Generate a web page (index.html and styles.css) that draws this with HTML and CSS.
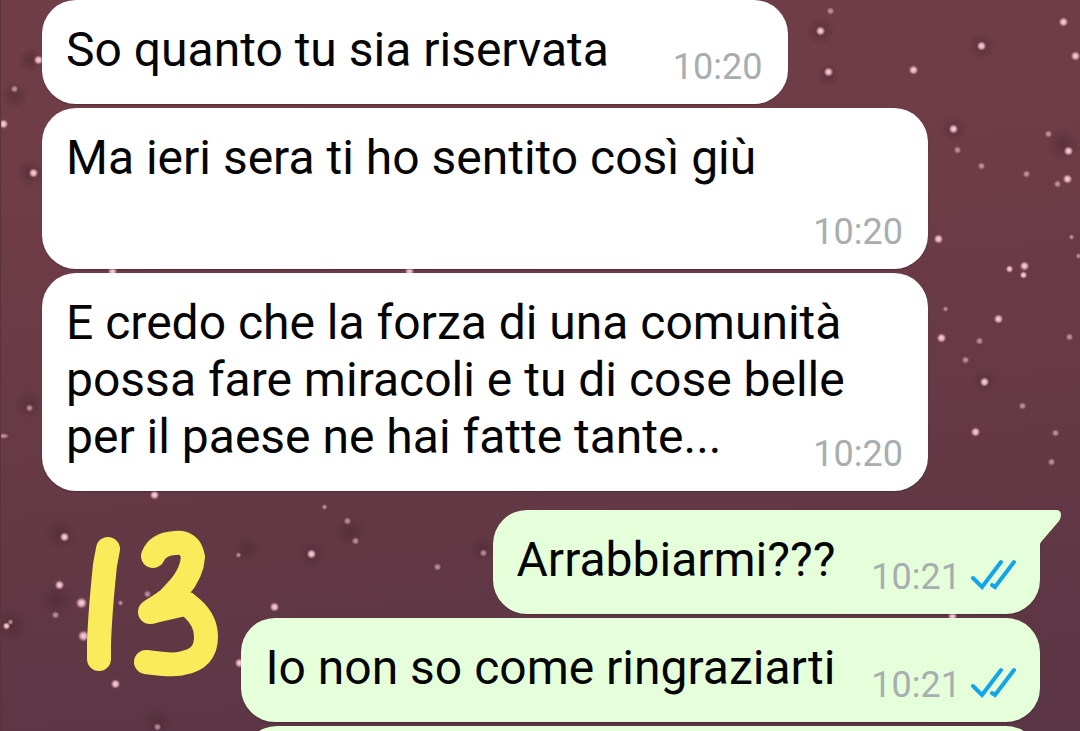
FILE: index.html
```html
<!DOCTYPE html>
<html lang="it">
<head>
<meta charset="utf-8">
<meta name="viewport" content="width=device-width, initial-scale=1">
<title>Chat</title>
<link rel="stylesheet" href="styles.css">
</head>
<body>
<svg class="sky" viewBox="0 0 1080 731" preserveAspectRatio="xMidYMid slice" aria-hidden="true">
  <defs>
    <radialGradient id="glow">
      <stop offset="0" stop-color="#ffdce4"/>
      <stop offset="0.5" stop-color="#eeb7c4" stop-opacity="0.85"/>
      <stop offset="1" stop-color="#b77c8b" stop-opacity="0"/>
    </radialGradient>
    <radialGradient id="haze">
      <stop offset="0" stop-color="#47262f" stop-opacity="0.5"/>
      <stop offset="1" stop-color="#47262f" stop-opacity="0"/>
    </radialGradient>
  </defs>
  <g fill="url(#haze)">
    <circle cx="820" cy="31" r="15"/><circle cx="828" cy="75" r="12"/><circle cx="981" cy="46" r="14"/>
    <circle cx="953" cy="129" r="13"/><circle cx="1063" cy="145" r="17"/><circle cx="984" cy="382" r="12"/>
    <circle cx="30" cy="60" r="13"/><circle cx="14" cy="95" r="14"/><circle cx="30" cy="173" r="14"/>
    <circle cx="60" cy="534" r="17"/><circle cx="56" cy="600" r="17"/><circle cx="10" cy="625" r="17"/>
    <circle cx="246" cy="549" r="14"/><circle cx="311" cy="554" r="14"/><circle cx="350" cy="532" r="16"/>
    <circle cx="157" cy="722" r="15"/><circle cx="28" cy="404" r="14"/><circle cx="482" cy="548" r="13"/>
  </g>
  <g fill="url(#glow)">
    <circle cx="820" cy="31" r="5"/><circle cx="828" cy="72" r="5"/><circle cx="913" cy="70" r="5"/>
    <circle cx="981" cy="46" r="5"/><circle cx="1063" cy="22" r="5"/><circle cx="1075" cy="56" r="5"/>
    <circle cx="953" cy="129" r="5"/><circle cx="1068" cy="151" r="5"/><circle cx="1067" cy="179" r="5"/>
    <circle cx="938" cy="239" r="5"/><circle cx="1009" cy="269" r="4"/><circle cx="1024" cy="266" r="5"/>
    <circle cx="1023" cy="275" r="4"/><circle cx="998" cy="319" r="5"/><circle cx="941" cy="338" r="5"/>
    <circle cx="984" cy="382" r="5"/><circle cx="975" cy="432" r="5"/><circle cx="38" cy="60" r="5"/>
    <circle cx="3" cy="124" r="5"/><circle cx="33" cy="173" r="5"/><circle cx="112" cy="271" r="5"/>
    <circle cx="409" cy="271" r="5"/>
    <circle cx="64" cy="537" r="5"/><circle cx="59" cy="585" r="5"/><circle cx="81" cy="603" r="6"/>
    <circle cx="83" cy="636" r="6"/><circle cx="115" cy="684" r="5"/><circle cx="6" cy="626" r="4"/>
    <circle cx="154" cy="495" r="5"/><circle cx="311" cy="554" r="5"/><circle cx="274" cy="607" r="5"/>
    <circle cx="239" cy="663" r="5"/><circle cx="952" cy="616" r="5"/>
  </g>
  <g fill="url(#glow)" opacity="0.6">
    <circle cx="830" cy="11" r="4"/><circle cx="957" cy="150" r="4"/><circle cx="981" cy="166" r="4"/>
    <circle cx="1026" cy="174" r="4"/><circle cx="1048" cy="134" r="4"/><circle cx="1057" cy="184" r="4"/>
    <circle cx="1071" cy="237" r="3"/><circle cx="1078" cy="256" r="3"/><circle cx="945" cy="309" r="3"/>
    <circle cx="979" cy="341" r="4"/><circle cx="965" cy="360" r="4"/><circle cx="1069" cy="337" r="4"/>
    <circle cx="1022" cy="406" r="4"/><circle cx="1055" cy="433" r="4"/><circle cx="1051" cy="462" r="4"/>
    <circle cx="14" cy="89" r="4"/><circle cx="29" cy="408" r="4"/><ellipse cx="3" cy="436" rx="6" ry="3"/>
    <circle cx="55" cy="615" r="4"/><circle cx="10" cy="622" r="3"/><circle cx="120" cy="603" r="3"/>
    <circle cx="147" cy="594" r="4"/><circle cx="157" cy="727" r="4"/><circle cx="238" cy="555" r="3"/>
    <circle cx="324" cy="507" r="3"/><circle cx="347" cy="521" r="4"/><circle cx="355" cy="541" r="4"/>
    <circle cx="437" cy="567" r="4"/><circle cx="483" cy="553" r="4"/>
  </g>
</svg>

<svg class="doodle" viewBox="0 0 140 150" role="img" aria-label="13">
  <path d="M28 24 L25 40 Q20 88 19 119 V134"/>
  <path d="M73 31 Q78 19 95 18 Q110 16 113 32 Q112 48 99 63 L87 76 L71 86 Q68 88 74 86 L100 80 Q107 78 113 84 Q126 96 126 112 Q126 134 103 138 Q95 141 66 137"/>
  <path d="M73 86 L86 76 L107 79"/>
</svg>

<main class="chat">
  <p class="bubble received">So quanto tu sia riservata <span class="meta"><time>10:20</time></span></p>
  <p class="bubble received">Ma ieri sera ti ho sentito così giù <span class="meta"><time>10:20</time></span></p>
  <p class="bubble received">E credo che la forza di una comunità possa fare miracoli e tu di cose belle per il paese ne hai fatte tante... <span class="meta"><time>10:20</time></span></p>
  <p class="bubble sent first">Arrabbiarmi??? <span class="meta"><time>10:21</time><svg class="ticks" viewBox="0 0 46 32" role="img" aria-label="Letto"><path d="M3 20 L12 29 L31 4"/><path d="M22 27 L25 29 L44 4"/></svg></span>
    <svg class="tail" viewBox="0 0 22 34" aria-hidden="true"><path d="M0 0 H16 Q21 0 21 5 Q21 8 19 11 L1 32 L0 34 Z"/></svg></p>
  <p class="bubble sent">Io non so come ringraziarti <span class="meta"><time>10:21</time><svg class="ticks" viewBox="0 0 46 32" role="img" aria-label="Letto"><path d="M3 20 L12 29 L31 4"/><path d="M22 27 L25 29 L44 4"/></svg></span></p>
  <div class="bubble sent next"></div>
</main>
</body>
</html>
```
FILE: styles.css
```css
* { box-sizing: border-box; }

body {
  position: relative;
  height: 100vh;
  margin: 0;
  overflow: hidden;
  background: linear-gradient(175deg, #703e47 0%, #6d3c47 30%, #653945 60%, #5a3545 100%);
  border-left: 1px solid #5b333b;
  font-family: Roboto, "Liberation Sans", sans-serif;
  color: #050505;
}

.sky {
  position: absolute;
  inset: 0;
  width: 100%;
  height: 100%;
}

.doodle {
  position: absolute;
  left: 79px;
  top: 525px;
  width: 140px;
  height: 150px;
  overflow: visible;
  fill: none;
  stroke: #faeb5a;
  stroke-width: 24px;
  stroke-linecap: round;
  stroke-linejoin: round;
}

.chat {
  position: relative;
  display: flex;
  flex-direction: column;
  gap: 4px;
  height: 100%;
  overflow: hidden;
  padding: 0 40px 0 41px;
}

.bubble {
  display: flow-root;
  position: relative;
  flex: none;
  max-width: calc(100% - 112px);
  margin: 0;
  padding: 21px 25px 16px 24px;
  border-radius: 34px;
  box-shadow: 0 1px 1px rgba(40, 20, 28, 0.35);
  font-size: 48px;
  line-height: 57px;
}

.received {
  align-self: flex-start;
  background: #ffffff;
}

.sent {
  align-self: flex-end;
  padding-right: 24px;
  background: #e5ffdb;
}

.first {
  margin-top: 15px;
  border-top-right-radius: 0;
}

.next {
  width: calc(100% - 201px);
  height: 104px;
}

.meta {
  float: right;
  display: flex;
  align-items: center;
  gap: 9px;
  margin: 25px 0 0 64px;
  font-size: 36px;
  line-height: 42px;
  color: #a7aeb0;
}

.sent .meta {
  margin-left: 36px;
}

.ticks {
  width: 46px;
  height: 32px;
  margin-bottom: 6px;
  fill: none;
  stroke: #12a5e8;
  stroke-width: 4px;
  stroke-linecap: round;
}

.tail {
  position: absolute;
  left: 100%;
  top: 0;
  width: 22px;
  height: 34px;
  fill: #e5ffdb;
}
```
